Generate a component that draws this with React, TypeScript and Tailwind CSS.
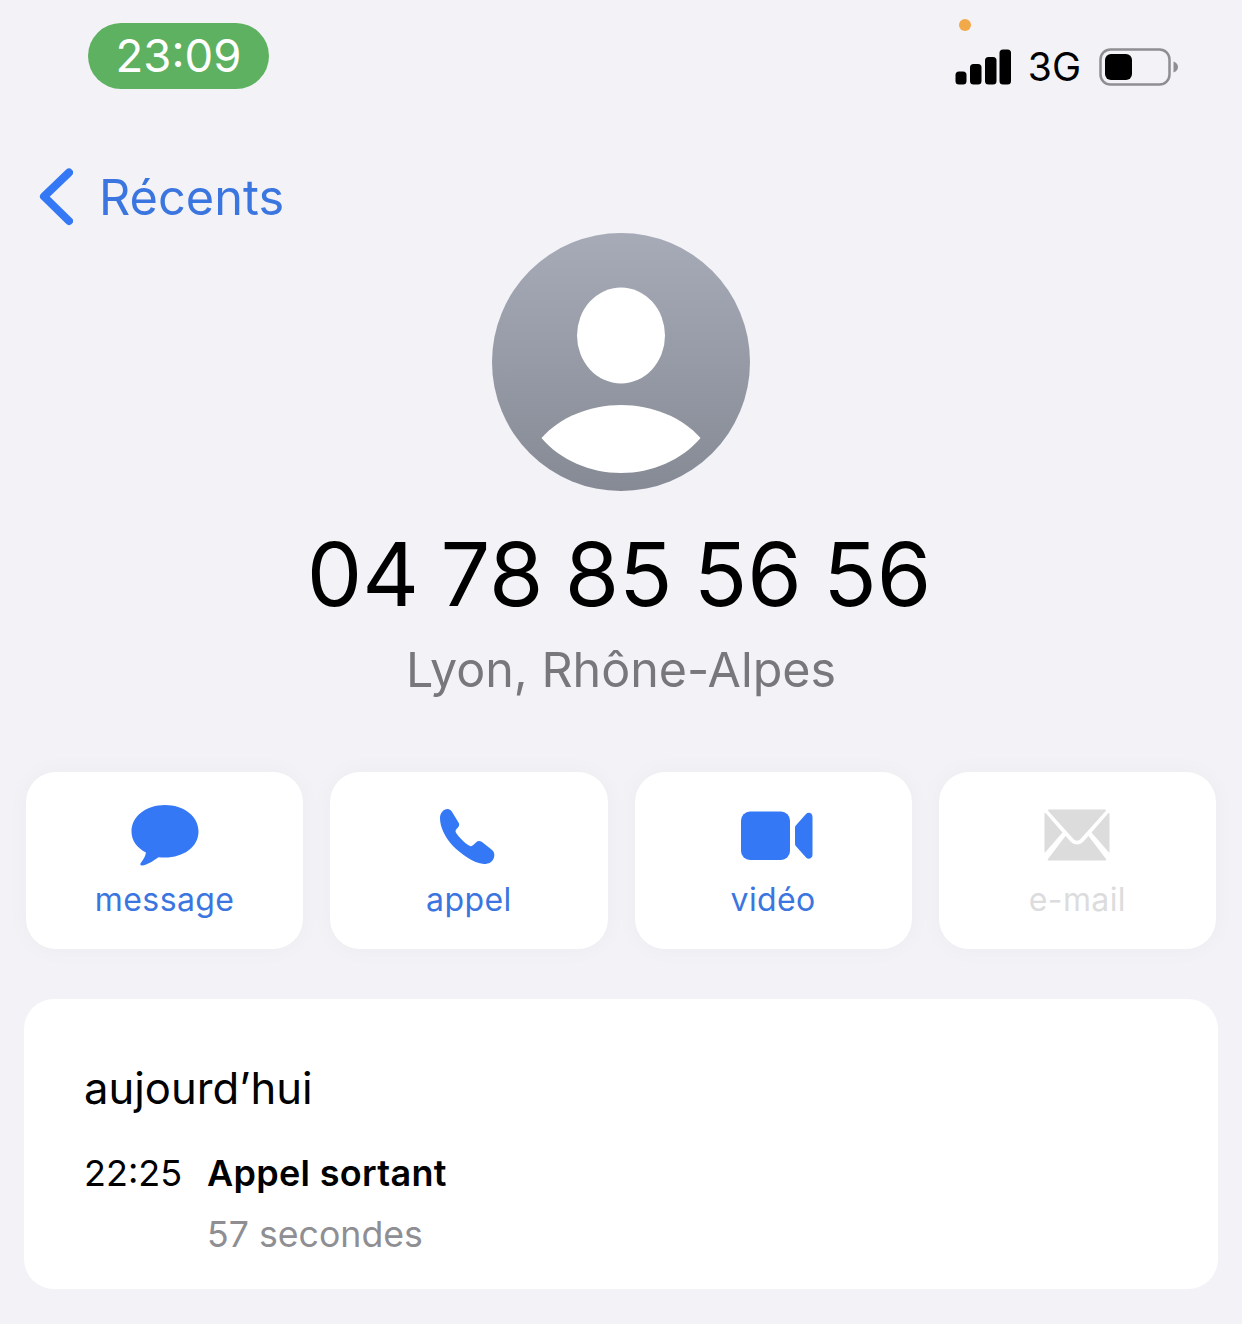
import React from "react";

const font = { fontFamily: "Inter, 'Liberation Sans', sans-serif" };

function Signal() {
  return (
    <svg width="56" height="36" viewBox="0 0 56 36" className="block">
      <rect x="0.5" y="22.5" width="11" height="13" rx="3.5" fill="#000" />
      <rect x="15" y="15" width="11.5" height="20.5" rx="3.5" fill="#000" />
      <rect x="30" y="8" width="11.5" height="27.5" rx="3.5" fill="#000" />
      <rect x="44.5" y="0.5" width="11.5" height="35" rx="3.5" fill="#000" />
    </svg>
  );
}

function Battery() {
  return (
    <svg width="80" height="38" viewBox="0 0 80 38" className="block">
      <rect x="1.5" y="1.5" width="69" height="35" rx="10" fill="none" stroke="#8e8e93" strokeWidth="2.5" />
      <rect x="6" y="6" width="27" height="26" rx="6" fill="#000" />
      <path d="M74.5 13.5 C77.5 14.5 79 16.5 79 19 C79 21.5 77.5 23.5 74.5 24.5 Z" fill="#8e8e93" />
    </svg>
  );
}

function MessageIcon() {
  return (
    <svg width="68" height="64" viewBox="0 0 68 64" className="block">
      <path
        d="M34 1 C52.5 1 67.5 12 67.5 27.5 C67.5 43 52.5 53.5 34 53.5 C31.5 53.5 29.5 53.4 27.5 53.2 C23 56.5 16 61 11 61.5 C9.5 61.6 8.8 60.3 9.7 59 C11.5 56.6 14.3 53 15 48.5 C6 44 0.5 36.5 0.5 27.5 C0.5 12 15.5 1 34 1 Z"
        fill="#3478f6"
      />
    </svg>
  );
}

function PhoneIcon() {
  return (
    <svg width="56" height="56" viewBox="0 0 56 56" className="block">
      <path
        d="M1 10 C1 5 4.5 1 8.5 1 C10.5 1 11.7 2 12.8 3.6 L19.5 14.5 C20.6 16.5 20.4 17.7 19 19.4 L17.5 21 C16.3 22.4 16.3 23.6 17.2 25 C20 29.5 26 35 30 37.5 C31.6 38.5 33 38.3 34.3 37 L37.5 34 C39 32.6 41 32.6 43 34 L52.5 41.5 C54.8 43.3 56 46 55 49.5 C53.5 54 50 56 45 56 C34 55 22 46 13.5 37.5 C6 29 1 19 1 10 Z"
        fill="#3478f6"
      />
    </svg>
  );
}

function VideoIcon() {
  return (
    <svg width="72" height="50" viewBox="0 0 72 50" className="block">
      <rect x="0" y="0.5" width="49" height="48.5" rx="9" fill="#3478f6" />
      <path
        d="M54 17 C54 15.8 54.3 15 55 14.2 L65 3 C67.5 0.5 71.5 2 71.5 6 L71.5 43.5 C71.5 47.5 67.5 49 65 46.5 L55 35.3 C54.3 34.5 54 33.7 54 32.5 Z"
        fill="#3478f6"
      />
    </svg>
  );
}

function MailIcon() {
  return (
    <svg width="66" height="52" viewBox="0 0 66 52" className="block">
      <path d="M5 0.5 H61 C62 0.5 62.3 1.3 61.7 2 L36.5 30 C34.5 32.2 31.5 32.2 29.5 30 L4.3 2 C3.7 1.3 4 0.5 5 0.5 Z" fill="#dcdcdc" />
      <path d="M0.5 5 C0.5 4 1.3 3.8 2 4.5 L18.5 23.5 L1.5 43 C0.8 43.8 0.5 43.5 0.5 42.5 Z" fill="#dcdcdc" />
      <path d="M65.5 5 C65.5 4 64.7 3.8 64 4.5 L47.5 23.5 L64.5 43 C65.2 43.8 65.5 43.5 65.5 42.5 Z" fill="#dcdcdc" />
      <path d="M4.5 51.5 C3.7 51.5 3.4 50.7 4 50 L21.5 27 L26.5 32.5 C30.5 36.5 35.5 36.5 39.5 32.5 L44.5 27 L62 50 C62.6 50.7 62.3 51.5 61.5 51.5 Z" fill="#dcdcdc" />
    </svg>
  );
}

function Action({ icon, label, muted, iconClass }: { icon: React.ReactNode; label: string; muted?: boolean; iconClass: string }) {
  return (
    <div className="flex h-[177px] flex-col items-center rounded-[30px] bg-white shadow-[0_0_24px_rgba(0,0,0,0.03)]">
      <div className={`flex h-[101px] items-start justify-center ${iconClass}`}>{icon}</div>
      <div className={`mt-[7px] text-[32px] leading-[40px] tracking-[0.4px] ${muted ? "text-[#dcdcde]" : "text-[#3b76e0]"}`}>{label}</div>
    </div>
  );
}

export default function App() {
  return (
    <div style={font} className="h-[1324px] w-[1242px] overflow-hidden bg-[#f2f2f7] antialiased">
      <div className="flex items-start justify-between pl-[88px] pr-[63px] pt-[19px]">
        <div className="mt-[4px] flex h-[66px] w-[181px] items-center justify-center rounded-[33px] bg-[#5eb160] text-[45.5px] leading-none text-white">
          23:09
        </div>
        <div className="flex flex-col">
          <div className="ml-[4px] h-[12px] w-[12px] rounded-full bg-[#f2a94a]" />
          <div className="mt-[17px] flex items-center">
            <Signal />
            <span className="ml-[17px] text-[39px] leading-[38px] text-black">3G</span>
            <span className="ml-[18px]"><Battery /></span>
          </div>
        </div>
      </div>

      <div className="mt-[79px] flex h-[58px] items-center pl-[39px]">
        <svg width="34" height="58" viewBox="0 0 34 58" className="block">
          <path d="M30 4.5 L5 28.5 L30 53" fill="none" stroke="#3478f6" strokeWidth="8" strokeLinecap="round" strokeLinejoin="round" />
        </svg>
        <span className="ml-[26px] mt-[2px] text-[48.7px] leading-none text-[#3b76e0]">Récents</span>
      </div>

      <div className="mt-[7px] flex justify-center">
        <svg width="258" height="258" viewBox="0 0 258 258" className="block">
          <defs>
            <linearGradient id="av" x1="0" y1="0" x2="0" y2="1">
              <stop offset="0" stopColor="#a7abb7" />
              <stop offset="1" stopColor="#868a95" />
            </linearGradient>
          </defs>
          <circle cx="129" cy="129" r="129" fill="url(#av)" />
          <ellipse cx="129" cy="102.5" rx="44" ry="48" fill="#fff" />
          <path d="M49.5 205 C68 184 98 172 129 172 C160 172 190 184 208.5 205 C190 227 160 240 129 240 C98 240 68 227 49.5 205 Z" fill="#fff" />
        </svg>
      </div>

      <div className="mt-[28px] pr-[4px] text-center text-[88px] leading-[110px] text-black [word-spacing:-3.5px]">04 78 85 56 56</div>
      <div className="mt-[11px] text-center text-[48.4px] leading-[60px] text-[#77777c]">Lyon, Rhône-Alpes</div>

      <div className="mt-[72px] grid grid-cols-4 gap-[27px] px-[26px]">
        <Action icon={<MessageIcon />} label="message" iconClass="pt-[32px]" />
        <Action icon={<PhoneIcon />} label="appel" iconClass="pt-[36px] pr-[3px]" />
        <Action icon={<VideoIcon />} label="vidéo" iconClass="pt-[39px] pl-[7px]" />
        <Action icon={<MailIcon />} label="e-mail" muted iconClass="pt-[37px]" />
      </div>

      <div className="mx-[24px] mt-[50px] h-[290px] rounded-[30px] bg-white pl-[60px] pt-[63px]">
        <div className="text-[43.6px] leading-[54px] text-black">aujourd’hui</div>
        <div className="mt-[35px] flex">
          <div className="w-[123px] text-[36px] leading-[44px] text-black">22:25</div>
          <div>
            <div className="text-[36px] font-semibold leading-[44px] tracking-[0.3px] text-black">Appel sortant</div>
            <div className="mt-[17px] text-[35.7px] leading-[44px] text-[#8e8e93]">57 secondes</div>
          </div>
        </div>
      </div>
    </div>
  );
}
